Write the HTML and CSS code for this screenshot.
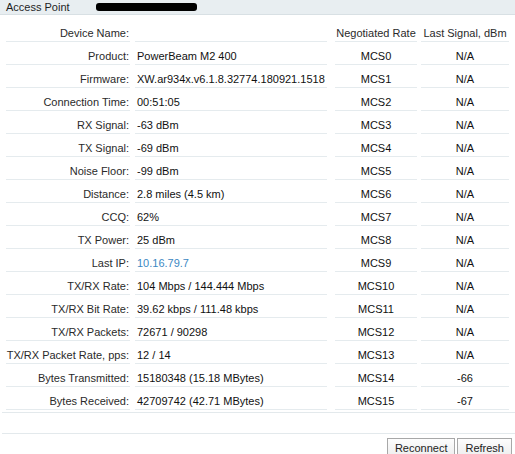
FILE: index.html
```html
<!DOCTYPE html>
<html>
<head>
<meta charset="utf-8">
<link rel="stylesheet" href="styles.css">
</head>
<body>
<div class="titlebar">
  <span class="title">Access Point</span>
  <span class="redact"></span>
</div>
<div class="grid">
  <div class="lbl">Device Name:</div><div class="val"></div><div class="rate head">Negotiated Rate</div><div class="sig head">Last Signal, dBm</div>
  <div class="lbl">Product:</div><div class="val">PowerBeam M2 400</div><div class="rate">MCS0</div><div class="sig">N/A</div>
  <div class="lbl">Firmware:</div><div class="val">XW.ar934x.v6.1.8.32774.180921.1518</div><div class="rate">MCS1</div><div class="sig">N/A</div>
  <div class="lbl">Connection Time:</div><div class="val">00:51:05</div><div class="rate">MCS2</div><div class="sig">N/A</div>
  <div class="lbl">RX Signal:</div><div class="val">-63 dBm</div><div class="rate">MCS3</div><div class="sig">N/A</div>
  <div class="lbl">TX Signal:</div><div class="val">-69 dBm</div><div class="rate">MCS4</div><div class="sig">N/A</div>
  <div class="lbl">Noise Floor:</div><div class="val">-99 dBm</div><div class="rate">MCS5</div><div class="sig">N/A</div>
  <div class="lbl">Distance:</div><div class="val">2.8 miles (4.5 km)</div><div class="rate">MCS6</div><div class="sig">N/A</div>
  <div class="lbl">CCQ:</div><div class="val">62%</div><div class="rate">MCS7</div><div class="sig">N/A</div>
  <div class="lbl">TX Power:</div><div class="val">25 dBm</div><div class="rate">MCS8</div><div class="sig">N/A</div>
  <div class="lbl">Last IP:</div><div class="val"><a class="ip" href="#">10.16.79.7</a></div><div class="rate">MCS9</div><div class="sig">N/A</div>
  <div class="lbl">TX/RX Rate:</div><div class="val">104 Mbps / 144.444 Mbps</div><div class="rate">MCS10</div><div class="sig">N/A</div>
  <div class="lbl">TX/RX Bit Rate:</div><div class="val">39.62 kbps / 111.48 kbps</div><div class="rate">MCS11</div><div class="sig">N/A</div>
  <div class="lbl">TX/RX Packets:</div><div class="val">72671 / 90298</div><div class="rate">MCS12</div><div class="sig">N/A</div>
  <div class="lbl">TX/RX Packet Rate, pps:</div><div class="val">12 / 14</div><div class="rate">MCS13</div><div class="sig">N/A</div>
  <div class="lbl">Bytes Transmitted:</div><div class="val">15180348 (15.18 MBytes)</div><div class="rate">MCS14</div><div class="sig">-66</div>
  <div class="lbl">Bytes Received:</div><div class="val">42709742 (42.71 MBytes)</div><div class="rate">MCS15</div><div class="sig">-67</div>
</div>
<div class="foot"></div>
<div class="buttons">
  <button class="btn">Reconnect</button>
  <button class="btn">Refresh</button>
</div>
</body>
</html>
```
FILE: styles.css
```css
html, body {
  margin: 0;
  padding: 0;
  background: #ffffff;
}
body {
  font-family: "Liberation Sans", Arial, sans-serif;
  font-size: 11px;
  color: #222;
  overflow: hidden;
}
.titlebar {
  display: flex;
  align-items: center;
  height: 14px;
  background: #e8eef1;
  border-bottom: 1px solid #d8e0e4;
  padding-left: 6px;
}
.title {
  line-height: 14px;
  color: #1e1e1e;
}
.redact {
  display: inline-block;
  width: 101px;
  height: 8px;
  margin-left: 26px;
  background: #000;
  border-radius: 3px;
}
.grid {
  display: grid;
  grid-template-columns: 124px 197px 90px 92px;
  margin: 4px 0 0 6px;
}
.grid > div {
  padding: 7px 0 1px 0;
  line-height: 14px;
  height: 14px;
  border-bottom: 1px solid #e5ebee;
  white-space: nowrap;
}
.lbl {
  text-align: right;
  padding-right: 1px !important;
  color: #2a2a2a;
}
.val {
  margin-left: 5px;
  padding-left: 2px !important;
  color: #111;
}
.rate {
  margin-left: 8px;
  text-align: center;
  color: #111;
}
.sig {
  margin-left: 4px;
  text-align: center;
  color: #111;
}
.head {
  color: #2a2a2a;
}
.ip {
  color: #3b88c3;
  text-decoration: none;
}
.foot {
  margin: 2px 0 0 2px;
  height: 20px;
  border-top: 1px solid #e3e9ec;
  border-bottom: 1px solid #e3e9ec;
}
.buttons {
  display: flex;
  justify-content: flex-end;
  gap: 2px;
  margin-top: 4px;
  padding-right: 3px;
}
.btn {
  font-family: "Liberation Sans", Arial, sans-serif;
  font-size: 11px;
  color: #222;
  height: 21px;
  padding: 0 7px;
  background: linear-gradient(#fdfdfd, #ececec);
  border: 1px solid #a8a8a8;
  border-radius: 0;
  line-height: 19px;
}
```
